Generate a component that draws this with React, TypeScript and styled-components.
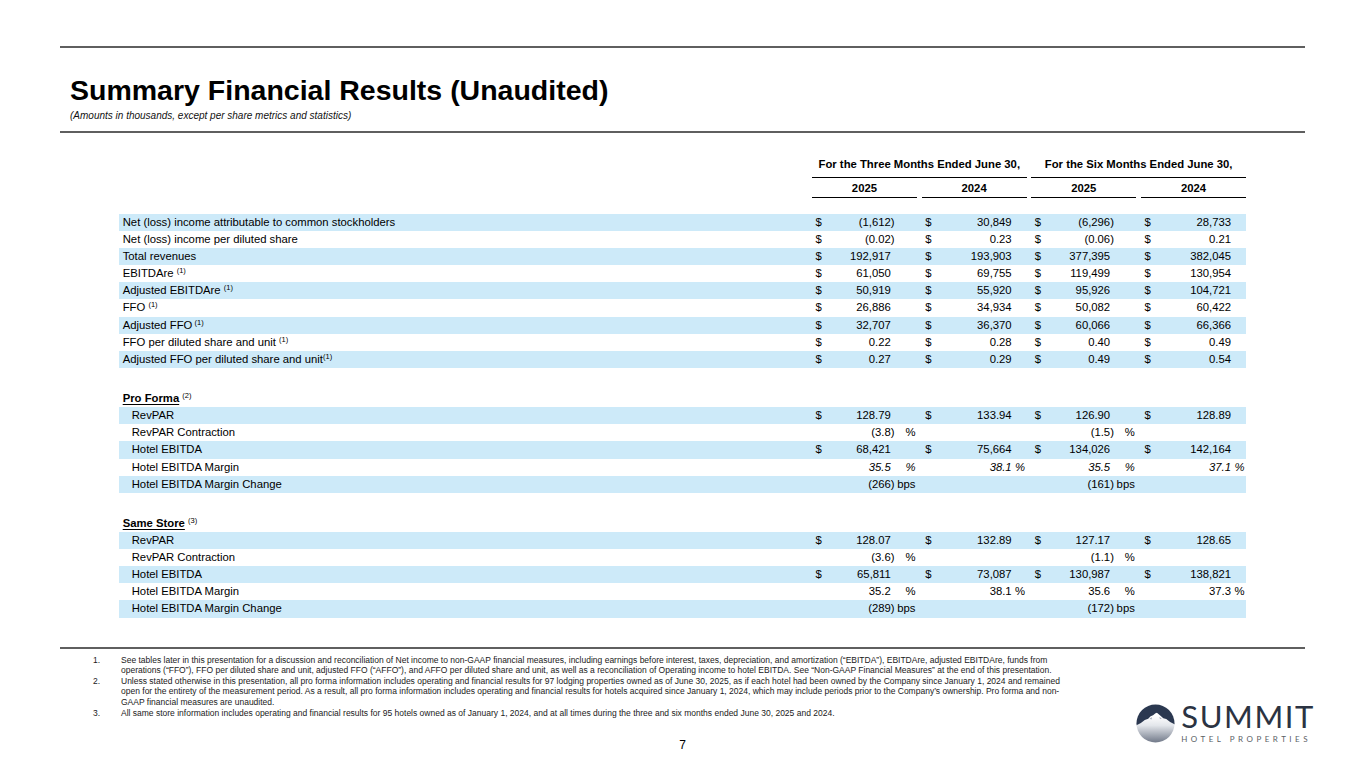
import React from 'react';
import styled, { createGlobalStyle } from 'styled-components';

const GlobalStyle = createGlobalStyle`
  html, body {
    margin: 0;
    padding: 0;
    background: #ffffff;
  }
  body {
    font-family: 'Liberation Sans', Arial, Helvetica, sans-serif;
    color: #000000;
  }
`;

const Page = styled.div`
  width: 1365px;
  height: 768px;
  overflow: hidden;
  background: #ffffff;
`;

const Rule = styled.div<{ $mt: number }>`
  height: 2px;
  margin: ${(p) => p.$mt}px 60px 0 60px;
  background: #5f5f5f;
`;

const Heading = styled.div`
  padding-left: 70px;
  margin-top: 28px;
`;

const Title = styled.h1`
  margin: 0;
  font-size: 28.5px;
  line-height: 28.5px;
  font-weight: 700;
  color: #000;
`;

const Subtitle = styled.div`
  margin-top: 5px;
  font-size: 10px;
  line-height: 12px;
  font-style: italic;
  color: #111;
`;

const COLS = '1fr repeat(4, 105px)';

const Table = styled.div`
  width: 1127px;
  margin: 24px 0 0 119px;
  font-size: 11.3px;
`;

const HeadRow = styled.div`
  display: grid;
  grid-template-columns: ${COLS};
  column-gap: 4.7px;
`;

const GroupHead = styled.div`
  grid-column: span 2;
  text-align: center;
  font-weight: 700;
  line-height: 14px;
  padding-bottom: 6px;
  border-bottom: 1.5px solid #000;
`;

const YearHead = styled.div`
  margin-top: 2.5px;
  text-align: center;
  font-weight: 700;
  line-height: 14px;
  padding-bottom: 2px;
  border-bottom: 1.5px solid #000;
`;

const Body = styled.div`
  margin-top: 16.5px;
`;

const Row = styled.div<{ $shade?: boolean }>`
  display: grid;
  grid-template-columns: ${COLS};
  column-gap: 4.7px;
  height: 17.1px;
  line-height: 17.1px;
  background: ${(p) => (p.$shade ? '#cdeaf9' : 'transparent')};
`;

const Spacer = styled.div`
  height: 22.3px;
`;

const Label = styled.div<{ $indent?: boolean; $head?: boolean }>`
  padding-left: ${(p) => (p.$indent ? 12.7 : 3.7)}px;
  font-weight: ${(p) => (p.$head ? 700 : 400)};
  white-space: nowrap;
`;

const Under = styled.span`
  text-decoration: underline;
  text-underline-offset: 1.5px;
`;

const Sup = styled.sup`
  font-size: 7.5px;
  line-height: 0;
  vertical-align: 4px;
  font-weight: 400;
`;

const Cell = styled.div<{ $italic?: boolean }>`
  display: flex;
  padding-left: 3.5px;
  font-style: ${(p) => (p.$italic ? 'italic' : 'normal')};
  white-space: nowrap;
`;

const Num = styled.span`
  flex: 1;
  text-align: right;
`;

const Ghost = styled.span`
  visibility: hidden;
`;

const Suffix = styled.span<{ $w: number }>`
  width: ${(p) => p.$w}px;
  box-sizing: border-box;
  padding-right: 1.5px;
  text-align: right;
`;

const Bottom = styled.div`
  display: grid;
  grid-template-columns: 1fr auto;
  grid-template-rows: auto auto;
  margin-top: 6px;
`;

const Notes = styled.ol`
  grid-column: 1;
  grid-row: 1;
  margin: 0;
  padding: 0 0 0 93px;
  list-style: none;
  font-size: 8.5px;
  line-height: 10.6px;
  color: #1a1a1a;
`;

const Note = styled.li`
  display: grid;
  grid-template-columns: 28px 1fr;
  white-space: nowrap;
`;

const Line = styled.span`
  display: block;
`;

const PageNum = styled.div`
  grid-column: 1 / 3;
  grid-row: 2;
  margin-top: 19.4px;
  text-align: center;
  font-size: 12px;
  line-height: 14px;
`;

const Logo = styled.div`
  grid-column: 2;
  grid-row: 1 / 3;
  align-self: end;
  display: flex;
  align-items: center;
  gap: 6px;
  margin: 0 50px 8px 0;
`;

const Brand = styled.div`
  display: flex;
  flex-direction: column;
`;

const BrandName = styled.span`
  font-family: Lato, 'Open Sans', sans-serif;
  font-weight: 400;
  font-size: 31px;
  line-height: 27px;
  letter-spacing: 1.6px;
  color: #2b3342;
`;

const BrandSub = styled.span`
  margin-top: 5px;
  font-family: Lato, 'Open Sans', sans-serif;
  font-size: 8px;
  line-height: 9px;
  letter-spacing: 3.5px;
  color: #5b5f66;
`;

type Val = { v: string; d?: boolean; s?: '%' | 'bps' } | null;

type DataRow = {
  label: React.ReactNode;
  cells: Val[];
  indent?: boolean;
  italic?: boolean;
};

const $ = (v: string): Val => ({ v, d: true });
const pct = (v: string): Val => ({ v, s: '%' });
const bps = (v: string): Val => ({ v, s: 'bps' });

const main: DataRow[] = [
  { label: 'Net (loss) income attributable to common stockholders', cells: [$('(1,612)'), $('30,849'), $('(6,296)'), $('28,733')] },
  { label: 'Net (loss) income per diluted share', cells: [$('(0.02)'), $('0.23'), $('(0.06)'), $('0.21')] },
  { label: 'Total revenues', cells: [$('192,917'), $('193,903'), $('377,395'), $('382,045')] },
  { label: <>EBITDAre <Sup>(1)</Sup></>, cells: [$('61,050'), $('69,755'), $('119,499'), $('130,954')] },
  { label: <>Adjusted EBITDAre <Sup>(1)</Sup></>, cells: [$('50,919'), $('55,920'), $('95,926'), $('104,721')] },
  { label: <>FFO <Sup>(1)</Sup></>, cells: [$('26,886'), $('34,934'), $('50,082'), $('60,422')] },
  { label: <>Adjusted FFO<Sup> (1)</Sup></>, cells: [$('32,707'), $('36,370'), $('60,066'), $('66,366')] },
  { label: <>FFO per diluted share and unit <Sup>(1)</Sup></>, cells: [$('0.22'), $('0.28'), $('0.40'), $('0.49')] },
  { label: <>Adjusted FFO per diluted share and unit<Sup>(1)</Sup></>, cells: [$('0.27'), $('0.29'), $('0.49'), $('0.54')] },
];

const proForma: DataRow[] = [
  { label: 'RevPAR', indent: true, cells: [$('128.79'), $('133.94'), $('126.90'), $('128.89')] },
  { label: 'RevPAR Contraction', indent: true, cells: [pct('(3.8)'), null, pct('(1.5)'), null] },
  { label: 'Hotel EBITDA', indent: true, cells: [$('68,421'), $('75,664'), $('134,026'), $('142,164')] },
  { label: 'Hotel EBITDA Margin', indent: true, italic: true, cells: [pct('35.5'), pct('38.1'), pct('35.5'), pct('37.1')] },
  { label: 'Hotel EBITDA Margin Change', indent: true, cells: [bps('(266)'), null, bps('(161)'), null] },
];

const sameStore: DataRow[] = [
  { label: 'RevPAR', indent: true, cells: [$('128.07'), $('132.89'), $('127.17'), $('128.65')] },
  { label: 'RevPAR Contraction', indent: true, cells: [pct('(3.6)'), null, pct('(1.1)'), null] },
  { label: 'Hotel EBITDA', indent: true, cells: [$('65,811'), $('73,087'), $('130,987'), $('138,821')] },
  { label: 'Hotel EBITDA Margin', indent: true, cells: [pct('35.2'), pct('38.1'), pct('35.6'), pct('37.3')] },
  { label: 'Hotel EBITDA Margin Change', indent: true, cells: [bps('(289)'), null, bps('(172)'), null] },
];

function ValueCell({ val, col, italic }: { val: Val; col: number; italic?: boolean }) {
  // first and third columns carry a trailing ")" slot so positives line up with negatives
  const parenCol = col % 2 === 0;
  if (!val) return <Cell />;
  const ghost = parenCol && !val.v.endsWith(')');
  return (
    <Cell $italic={italic}>
      <span>{val.d ? '$' : ''}</span>
      <Num>
        {val.v}
        {ghost && <Ghost>)</Ghost>}
      </Num>
      <Suffix $w={parenCol ? 22.4 : 15}>{val.s ?? ''}</Suffix>
    </Cell>
  );
}

function Block({ rows }: { rows: DataRow[] }) {
  return (
    <>
      {rows.map((r, i) => (
        <Row key={i} $shade={i % 2 === 0}>
          <Label $indent={r.indent}>{r.label}</Label>
          {r.cells.map((c, j) => (
            <ValueCell key={j} val={c} col={j} italic={r.italic} />
          ))}
        </Row>
      ))}
    </>
  );
}

function SectionHead({ title, note }: { title: string; note: string }) {
  return (
    <Row>
      <Label $head>
        <Under>{title}</Under> <Sup>{note}</Sup>
      </Label>
    </Row>
  );
}

function SummitMark() {
  return (
    <svg width="39" height="39" viewBox="0 0 40 40">
      <defs>
        <clipPath id="disc">
          <circle cx="20" cy="20" r="19.5" />
        </clipPath>
        <linearGradient id="snow" x1="0" y1="0" x2="0" y2="1">
          <stop offset="0.3" stopColor="#ffffff" />
          <stop offset="0.55" stopColor="#e3e6eb" />
          <stop offset="1" stopColor="#6e7686" />
        </linearGradient>
      </defs>
      <g clipPath="url(#disc)">
        <rect width="40" height="40" fill="url(#snow)" />
        <path
          d="M0 0 H40 V21 L35 18.5 L31 15.5 L28 14.5 L24.5 11.5 L21.5 9 L20 9.5 L17.5 11.5 L15 12.5 L12.5 15 L9 16.5 L5 19.5 L0 22 Z"
          fill="#2b3850"
        />
        <path d="M14 15 L16.5 13.5 L15.8 16 Z M24 13 L26.5 15.5 L24.5 15.2 Z" fill="#9aa2b0" />
      </g>
    </svg>
  );
}

export default function App() {
  return (
    <Page>
      <GlobalStyle />
      <Rule $mt={46} />
      <Heading>
        <Title>Summary Financial Results (Unaudited)</Title>
        <Subtitle>(Amounts in thousands, except per share metrics and statistics)</Subtitle>
      </Heading>
      <Rule $mt={9.5} />

      <Table>
        <HeadRow>
          <div />
          <GroupHead>For the Three Months Ended June 30,</GroupHead>
          <GroupHead>For the Six Months Ended June 30,</GroupHead>
        </HeadRow>
        <HeadRow>
          <div />
          <YearHead>2025</YearHead>
          <YearHead>2024</YearHead>
          <YearHead>2025</YearHead>
          <YearHead>2024</YearHead>
        </HeadRow>
        <Body>
          <Block rows={main} />
          <Spacer />
          <SectionHead title="Pro Forma" note="(2)" />
          <Block rows={proForma} />
          <Spacer />
          <SectionHead title="Same Store" note="(3)" />
          <Block rows={sameStore} />
        </Body>
      </Table>

      <Rule $mt={29} />
      <Bottom>
        <Notes>
          <Note>
            <span>1.</span>
            <span>
              <Line>
                See tables later in this presentation for a discussion and reconciliation of Net income to non-GAAP financial measures, including earnings before interest, taxes, depreciation, and amortization (“EBITDA”), EBITDAre, adjusted EBITDAre, funds from
              </Line>
              <Line>
                operations (“FFO”), FFO per diluted share and unit, adjusted FFO (“AFFO”), and AFFO per diluted share and unit, as well as a reconciliation of Operating income to hotel EBITDA. See “Non-GAAP Financial Measures” at the end of this presentation.
              </Line>
            </span>
          </Note>
          <Note>
            <span>2.</span>
            <span>
              <Line>
                Unless stated otherwise in this presentation, all pro forma information includes operating and financial results for 97 lodging properties owned as of June 30, 2025, as if each hotel had been owned by the Company since January 1, 2024 and remained
              </Line>
              <Line>
                open for the entirety of the measurement period. As a result, all pro forma information includes operating and financial results for hotels acquired since January 1, 2024, which may include periods prior to the Company’s ownership. Pro forma and non-
              </Line>
              <Line>GAAP financial measures are unaudited.</Line>
            </span>
          </Note>
          <Note>
            <span>3.</span>
            <span>
              <Line>
                All same store information includes operating and financial results for 95 hotels owned as of January 1, 2024, and at all times during the three and six months ended June 30, 2025 and 2024.
              </Line>
            </span>
          </Note>
        </Notes>
        <PageNum>7</PageNum>
        <Logo>
          <SummitMark />
          <Brand>
            <BrandName>SUMMIT</BrandName>
            <BrandSub>HOTEL PROPERTIES</BrandSub>
          </Brand>
        </Logo>
      </Bottom>
    </Page>
  );
}
